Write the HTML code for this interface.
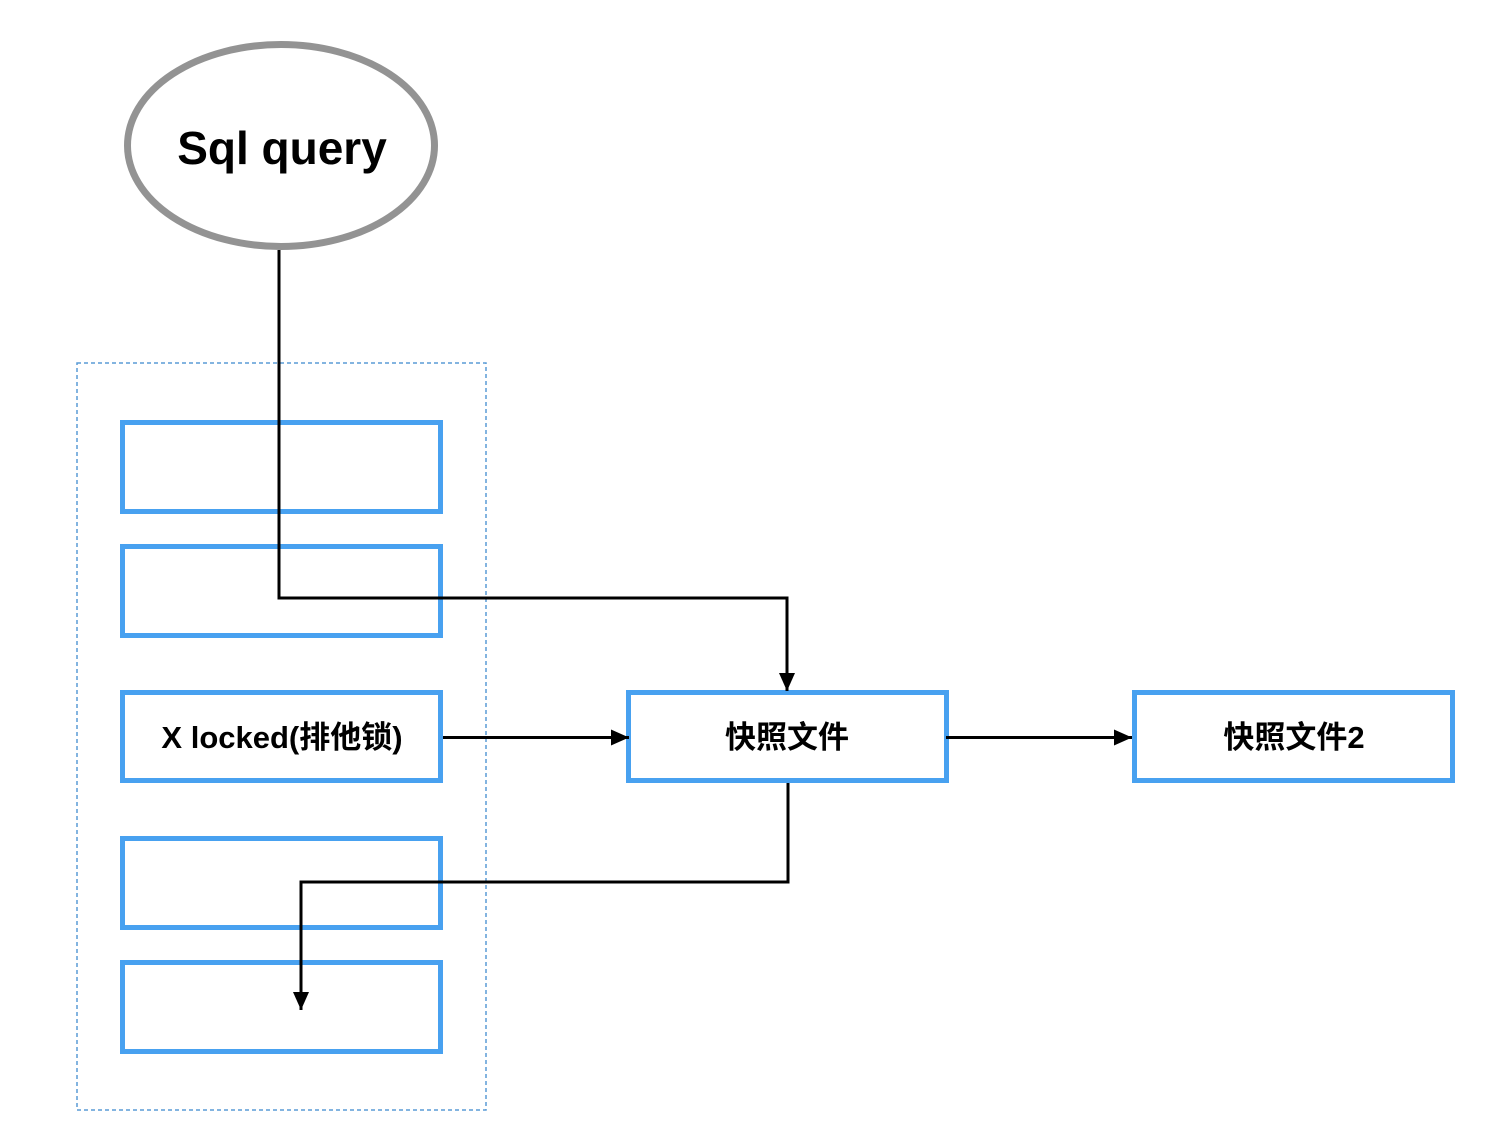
<!DOCTYPE html>
<html><head><meta charset="utf-8"><style>
html,body{margin:0;padding:0;background:#fff;}
svg{display:block;}
text{font-family:"Liberation Sans","Noto Sans CJK SC",sans-serif;font-weight:bold;fill:#000;}
</style></head><body>
<svg width="1510" height="1136" viewBox="0 0 1510 1136" xmlns="http://www.w3.org/2000/svg">
<defs><marker id="a" markerWidth="18" markerHeight="16" refX="18" refY="8" orient="auto" markerUnits="userSpaceOnUse"><path d="M0,0 L18,8 L0,16 Z" fill="#000"/></marker></defs>
<rect x="0" y="0" width="1510" height="1136" fill="#fff"/>
<ellipse cx="281" cy="145.5" rx="153.5" ry="101" fill="#fff" stroke="#939393" stroke-width="7"/>
<text x="282" y="164" font-size="46" text-anchor="middle">Sql query</text>
<rect x="77" y="363" width="409" height="747" fill="none" stroke="#5a9bd5" stroke-width="1.5" stroke-dasharray="4,3"/>
<g fill="none" stroke="#48a1f0" stroke-width="5">
<rect x="122.5" y="422.5" width="318" height="89"/>
<rect x="122.5" y="546.5" width="318" height="89"/>
<rect x="122.5" y="692.5" width="318" height="88"/>
<rect x="122.5" y="838.5" width="318" height="89"/>
<rect x="122.5" y="962.5" width="318" height="89"/>
<rect x="628.5" y="692.5" width="318" height="88"/>
<rect x="1134.5" y="692.5" width="318" height="88"/>
</g>
<g fill="none" stroke="#000" stroke-width="3">
<path d="M279 250 V598 H787 V691" marker-end="url(#a)"/>
<path d="M443 737.5 H629" marker-end="url(#a)"/>
<path d="M946 737.5 H1132" marker-end="url(#a)"/>
<path d="M788 783 V882 H301 V1010" marker-end="url(#a)"/>
</g>
<text x="282" y="748" font-size="31" text-anchor="middle">X locked(排他锁)</text>
<text x="787" y="748" font-size="31" text-anchor="middle">快照文件</text>
<text x="1294" y="748" font-size="31" text-anchor="middle">快照文件2</text>
</svg>
</body></html>
